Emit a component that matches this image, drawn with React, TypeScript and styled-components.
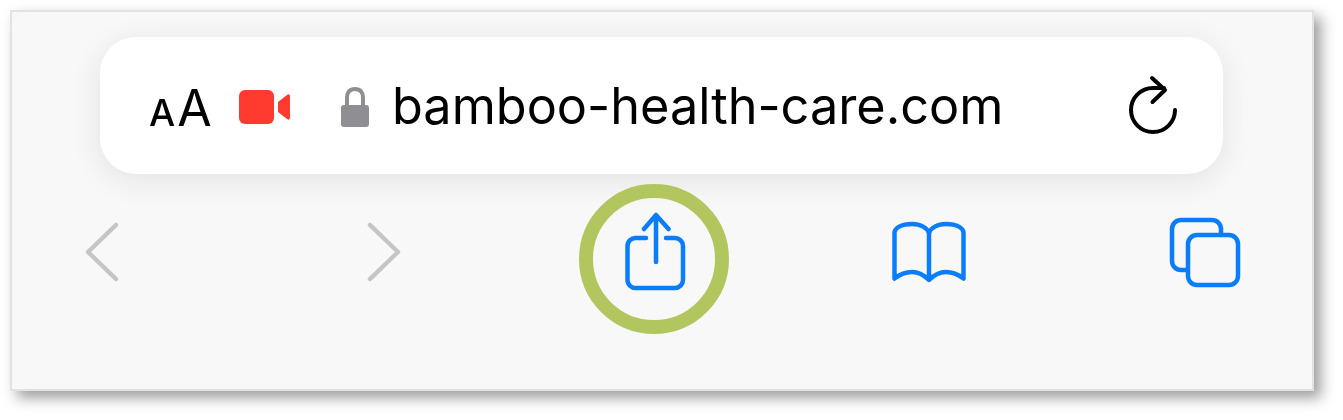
import React from "react";
import styled, { createGlobalStyle } from "styled-components";

const Global = createGlobalStyle`
  html, body { margin: 0; padding: 0; height: 420px; background: #fff; overflow: hidden; }
  body { font-family: Inter, "Liberation Sans", sans-serif; }
  #root { box-sizing: border-box; height: 420px; padding: 10px 0 0 10px; }
`;

const Frame = styled.div`
  box-sizing: border-box;
  width: 1304px;
  height: 381px;
  padding: 25px 0 0 88px;
  background: #f8f8f8;
  border: 2px solid #e2e2e2;
  box-shadow: 7px 7px 13px rgba(0, 0, 0, 0.38);
`;

const AddressBar = styled.div`
  box-sizing: border-box;
  width: 1123px;
  height: 137px;
  display: flex;
  align-items: center;
  padding-left: 49px;
  background: #fff;
  border-radius: 36px;
  box-shadow: 0 6px 32px rgba(0, 0, 0, 0.09);
  color: #000;
  filter: blur(0.5px);
`;

const TextSize = styled.div`
  display: flex;
  align-items: baseline;
  gap: 2px;
  width: 90px;
  margin-top: 4px;
  line-height: 1;
`;

const Letter = styled.span<{ $size: number; $weight: number }>`
  font-size: ${(p) => p.$size}px;
  font-weight: ${(p) => p.$weight};
`;

const CameraIcon = styled.svg`
  display: block;
  margin-top: 3px;
  flex: none;
`;

const LockIcon = styled.svg`
  display: block;
  margin-left: 50px;
  margin-top: 2px;
  flex: none;
`;

const Domain = styled.span`
  margin-left: 23px;
  margin-top: 2px;
  font-size: 50.4px;
  font-weight: 400;
  line-height: 1;
  white-space: nowrap;
  flex: none;
`;

const ReloadIcon = styled.svg`
  display: block;
  margin-left: auto;
  margin-right: 44px;
  margin-top: -1px;
  flex: none;
`;

const Toolbar = styled.div`
  display: flex;
  align-items: center;
  height: 90px;
  margin: 33px 0 0 -16px;
  filter: blur(0.4px);
`;

const Slot = styled.div<{ $gap: number }>`
  position: relative;
  display: flex;
  flex: none;
  margin-left: ${(p) => p.$gap}px;
`;

const Ring = styled.div`
  position: absolute;
  box-sizing: border-box;
  left: -45px;
  top: -28px;
  width: 150px;
  height: 150px;
  border: 14px solid #b2c65f;
  border-radius: 50%;
`;

const grey = "#c5c5c7";
const blue = "#0a7dff";

export default function App() {
  return (
    <>
      <Global />
      <Frame>
        <AddressBar>
          <TextSize>
            <Letter $size={37} $weight={500}>A</Letter>
            <Letter $size={50} $weight={400}>A</Letter>
          </TextSize>
          <CameraIcon width="52" height="34" viewBox="0 0 52 34">
            <rect x="0" y="0" width="35" height="34" rx="6" fill="#ff3b30" />
            <path d="M39 12 L48 5 Q51 3 51 7 V27 Q51 31 48 29 L39 22 Z" fill="#ff3b30" />
          </CameraIcon>
          <LockIcon width="28" height="41" viewBox="0 0 28 41">
            <path d="M6 20 V11.5 C6 6 9 3 14 3 C19 3 22 6 22 11.5 V20" fill="none" stroke="#8e8e93" strokeWidth="4" />
            <rect x="0" y="19" width="28" height="22" rx="3" fill="#8e8e93" />
          </LockIcon>
          <Domain>bamboo-health-care.com</Domain>
          <ReloadIcon width="52" height="60" viewBox="0 0 52 60">
            <path
              d="M48 35 A22 22 0 1 1 26 13 H37 M25 3 L38 15 L25.5 27"
              fill="none"
              stroke="#000"
              strokeWidth="4"
              strokeLinecap="round"
              strokeLinejoin="round"
            />
          </ReloadIcon>
        </AddressBar>
        <Toolbar>
          <Slot $gap={0}>
            <svg width="36" height="62" viewBox="0 0 36 62">
              <path d="M32 4 L4 31 L32 58" fill="none" stroke={grey} strokeWidth="4.5" strokeLinecap="round" strokeLinejoin="round" />
            </svg>
          </Slot>
          <Slot $gap={247}>
            <svg width="36" height="62" viewBox="0 0 36 62">
              <path d="M3 4 L31 31 L3 58" fill="none" stroke={grey} strokeWidth="4.5" strokeLinecap="round" strokeLinejoin="round" />
            </svg>
          </Slot>
          <Slot $gap={221}>
            <Ring />
            <svg width="62" height="80" viewBox="0 0 62 80">
              <path
                d="M22 26 H12 A8 8 0 0 0 3.500 34 V68 A8 8 0 0 0 12 76 H51 A8 8 0 0 0 59 68 V34 A8 8 0 0 0 51 26 H42 M32 50 V4 M20 17 L32 3 L44.500 17"
                fill="none"
                stroke={blue}
                strokeWidth="4.5"
                strokeLinecap="round"
                strokeLinejoin="round"
              />
            </svg>
          </Slot>
          <Slot $gap={205}>
            <svg width="76" height="64" viewBox="0 0 76 64">
              <path
                d="M3.500 58.500 V13 C3.500 8 10 4 21 4 C30 4 36 8 38 13 V60 C34 56 29 52 21 52 C13 52 8 55 3.500 58.500 Z M72.500 58.500 V13 C72.500 8 66 4 55 4 C46 4 40 8 38 13 V60 C42 56 47 52 55 52 C63 52 68 55 72.500 58.500 Z"
                fill="none"
                stroke={blue}
                strokeWidth="4.5"
                strokeLinecap="round"
                strokeLinejoin="round"
              />
            </svg>
          </Slot>
          <Slot $gap={201}>
            <svg width="74" height="73" viewBox="0 0 74 73">
              <path
                d="M20 54 H13 A9 9 0 0 1 4 45 V13 A9 9 0 0 1 13 4 H44 A9 9 0 0 1 53 13 V19"
                fill="none"
                stroke={blue}
                strokeWidth="4.5"
              />
              <rect x="20" y="19" width="50" height="50" rx="9" fill="none" stroke={blue} strokeWidth="4.5" />
            </svg>
          </Slot>
        </Toolbar>
      </Frame>
    </>
  );
}
